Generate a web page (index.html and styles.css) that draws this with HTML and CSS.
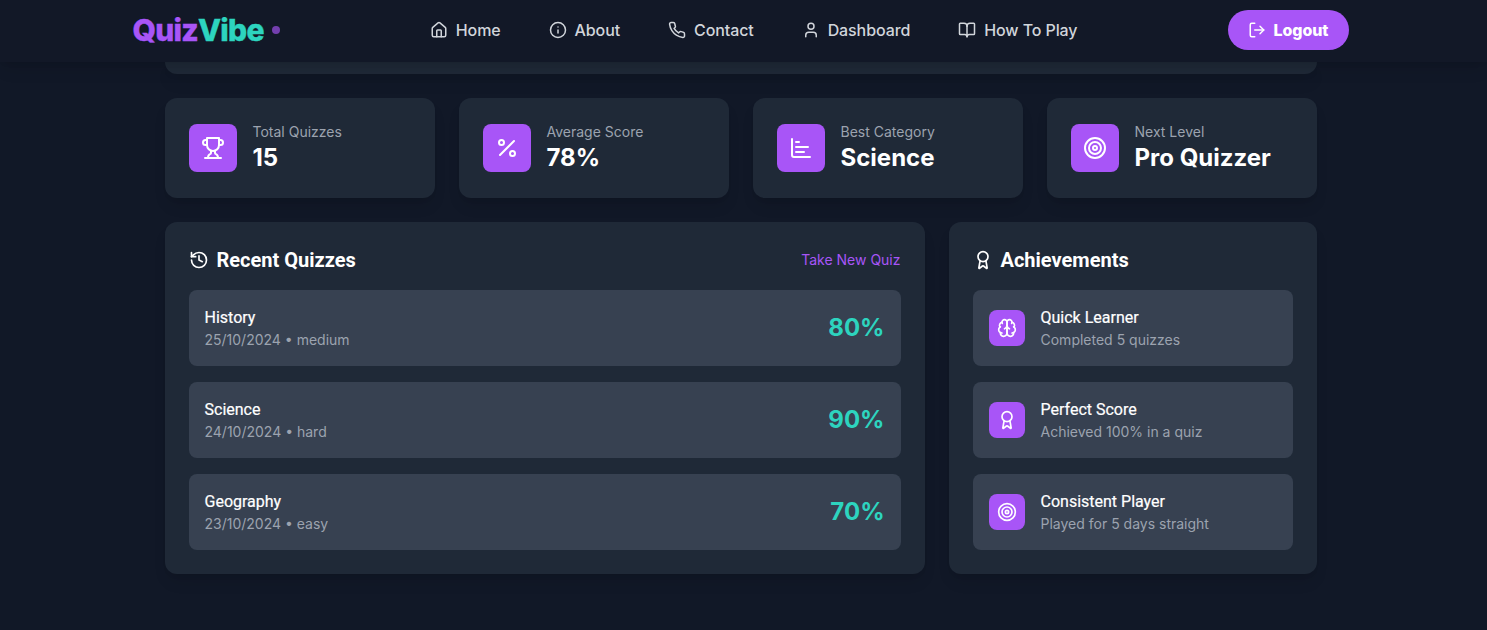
FILE: index.html
```html
<!DOCTYPE html>
<html lang="en">
<head>
<meta charset="utf-8">
<title>QuizVibe</title>
<link rel="stylesheet" href="styles.css">
</head>
<body>
<svg class="sprite" aria-hidden="true">
  <symbol id="home" viewBox="0 0 24 24"><path d="M15 21v-8a1 1 0 0 0-1-1h-4a1 1 0 0 0-1 1v8"/><path d="M3 10a2 2 0 0 1 .709-1.528l7-5.999a2 2 0 0 1 2.582 0l7 5.999A2 2 0 0 1 21 10v9a2 2 0 0 1-2 2H5a2 2 0 0 1-2-2z"/></symbol>
  <symbol id="info" viewBox="0 0 24 24"><circle cx="12" cy="12" r="10"/><path d="M12 16v-4"/><path d="M12 8h.01"/></symbol>
  <symbol id="phone" viewBox="0 0 24 24"><path d="M22 16.92v3a2 2 0 0 1-2.18 2 19.79 19.79 0 0 1-8.63-3.07 19.5 19.5 0 0 1-6-6 19.79 19.79 0 0 1-3.07-8.67A2 2 0 0 1 4.11 2h3a2 2 0 0 1 2 1.72 12.84 12.84 0 0 0 .7 2.81 2 2 0 0 1-.45 2.11L8.09 9.91a16 16 0 0 0 6 6l1.27-1.27a2 2 0 0 1 2.11-.45 12.84 12.84 0 0 0 2.81.7A2 2 0 0 1 22 16.92z"/></symbol>
  <symbol id="user" viewBox="0 0 24 24"><path d="M19 21v-2a4 4 0 0 0-4-4H9a4 4 0 0 0-4 4v2"/><circle cx="12" cy="7" r="4"/></symbol>
  <symbol id="book" viewBox="0 0 24 24"><path d="M12 7v14"/><path d="M3 18a1 1 0 0 1-1-1V4a1 1 0 0 1 1-1h5a4 4 0 0 1 4 4 4 4 0 0 1 4-4h5a1 1 0 0 1 1 1v13a1 1 0 0 1-1 1h-6a3 3 0 0 0-3 3 3 3 0 0 0-3-3z"/></symbol>
  <symbol id="logout" viewBox="0 0 24 24"><path d="M9 21H5a2 2 0 0 1-2-2V5a2 2 0 0 1 2-2h4"/><path d="m16 17 5-5-5-5"/><path d="M21 12H9"/></symbol>
  <symbol id="trophy" viewBox="0 0 24 24"><path d="M6 9H4.5a2.5 2.5 0 0 1 0-5H6"/><path d="M18 9h1.5a2.5 2.5 0 0 0 0-5H18"/><path d="M4 22h16"/><path d="M10 14.66V17c0 .55-.47.98-.97 1.21C7.85 18.75 7 20.24 7 22"/><path d="M14 14.66V17c0 .55.47.98.97 1.21C16.15 18.75 17 20.24 17 22"/><path d="M18 2H6v7a6 6 0 0 0 12 0V2Z"/></symbol>
  <symbol id="percent" viewBox="0 0 24 24"><path d="M19 5 5 19"/><circle cx="6.5" cy="6.5" r="2.5"/><circle cx="17.5" cy="17.5" r="2.5"/></symbol>
  <symbol id="chart" viewBox="0 0 24 24"><path d="M3 3v16a2 2 0 0 0 2 2h16"/><path d="M7 16h8"/><path d="M7 11h12"/><path d="M7 6h3"/></symbol>
  <symbol id="target" viewBox="0 0 24 24"><circle cx="12" cy="12" r="10"/><circle cx="12" cy="12" r="6"/><circle cx="12" cy="12" r="2"/></symbol>
  <symbol id="history" viewBox="0 0 24 24"><path d="M3 12a9 9 0 1 0 9-9 9.75 9.75 0 0 0-6.74 2.74L3 8"/><path d="M3 3v5h5"/><path d="M12 7v5l4 2"/></symbol>
  <symbol id="award" viewBox="0 0 24 24"><path d="m15.477 12.89 1.515 8.526a.5.5 0 0 1-.81.47l-3.58-2.687a1 1 0 0 0-1.197 0l-3.586 2.686a.5.5 0 0 1-.81-.469l1.514-8.526"/><circle cx="12" cy="8" r="6"/></symbol>
  <symbol id="brain" viewBox="0 0 24 24"><path d="M12 5a3 3 0 1 0-5.997.125 4 4 0 0 0-2.526 5.77 4 4 0 0 0 .556 6.588A4 4 0 1 0 12 18Z"/><path d="M12 5a3 3 0 1 1 5.997.125 4 4 0 0 1 2.526 5.77 4 4 0 0 1-.556 6.588A4 4 0 1 1 12 18Z"/><path d="M15 13a4.5 4.5 0 0 1-3-4 4.5 4.5 0 0 1-3 4"/><path d="M17.599 6.5a3 3 0 0 0 .399-1.375"/><path d="M6.003 5.125A3 3 0 0 0 6.401 6.5"/><path d="M3.477 10.896a4 4 0 0 1 .585-.396"/><path d="M19.938 10.5a4 4 0 0 1 .585.396"/><path d="M6 18a4 4 0 0 1-1.967-.516"/><path d="M19.967 17.484A4 4 0 0 1 18 18"/></symbol>
</svg>

<header class="site-header">
  <div class="header-inner">
    <a class="logo"><span class="logo-name"><span class="logo-quiz">Quiz</span><span class="logo-vibe">Vibe</span></span><span class="logo-dot"></span></a>
    <nav class="nav">
      <a class="nav-link"><svg class="icon icon-sm"><use href="#home"/></svg><span>Home</span></a>
      <a class="nav-link"><svg class="icon icon-sm"><use href="#info"/></svg><span>About</span></a>
      <a class="nav-link"><svg class="icon icon-sm"><use href="#phone"/></svg><span>Contact</span></a>
      <a class="nav-link"><svg class="icon icon-sm"><use href="#user"/></svg><span>Dashboard</span></a>
      <a class="nav-link"><svg class="icon icon-sm"><use href="#book"/></svg><span>How To Play</span></a>
    </nav>
    <button class="logout"><svg class="icon icon-sm"><use href="#logout"/></svg><span>Logout</span></button>
  </div>
</header>

<main class="dashboard">
  <section class="profile-card"></section>

  <section class="stats">
    <div class="card stat"><div class="tile tile-lg"><svg class="icon icon-lg"><use href="#trophy"/></svg></div><div><p class="muted">Total Quizzes</p><p class="stat-value">15</p></div></div>
    <div class="card stat"><div class="tile tile-lg"><svg class="icon icon-lg"><use href="#percent"/></svg></div><div><p class="muted">Average Score</p><p class="stat-value">78%</p></div></div>
    <div class="card stat"><div class="tile tile-lg"><svg class="icon icon-lg"><use href="#chart"/></svg></div><div><p class="muted">Best Category</p><p class="stat-value">Science</p></div></div>
    <div class="card stat"><div class="tile tile-lg"><svg class="icon icon-lg"><use href="#target"/></svg></div><div><p class="muted">Next Level</p><p class="stat-value">Pro Quizzer</p></div></div>
  </section>

  <section class="panels">
    <div class="card">
      <div class="panel-head"><h2 class="panel-title"><svg class="icon icon-md"><use href="#history"/></svg>Recent Quizzes</h2><a class="panel-link">Take New Quiz</a></div>
      <div class="rows">
        <div class="row quiz"><div><h3 class="row-title">History</h3><p class="muted">25/10/2024 • medium</p></div><span class="score">80%</span></div>
        <div class="row quiz"><div><h3 class="row-title">Science</h3><p class="muted">24/10/2024 • hard</p></div><span class="score">90%</span></div>
        <div class="row quiz"><div><h3 class="row-title">Geography</h3><p class="muted">23/10/2024 • easy</p></div><span class="score">70%</span></div>
      </div>
    </div>
    <div class="card">
      <div class="panel-head"><h2 class="panel-title"><svg class="icon icon-md"><use href="#award"/></svg>Achievements</h2></div>
      <div class="rows">
        <div class="row"><div class="tile tile-sm"><svg class="icon icon-md"><use href="#brain"/></svg></div><div><h3 class="row-title">Quick Learner</h3><p class="muted">Completed 5 quizzes</p></div></div>
        <div class="row"><div class="tile tile-sm"><svg class="icon icon-md"><use href="#award"/></svg></div><div><h3 class="row-title">Perfect Score</h3><p class="muted">Achieved 100% in a quiz</p></div></div>
        <div class="row"><div class="tile tile-sm"><svg class="icon icon-md"><use href="#target"/></svg></div><div><h3 class="row-title">Consistent Player</h3><p class="muted">Played for 5 days straight</p></div></div>
      </div>
    </div>
  </section>
</main>
</body>
</html>
```

FILE: styles.css
```css
* { box-sizing: border-box; margin: 0; padding: 0; }

body {
  min-height: 630px;
  padding-right: 6px;
  background: #111827;
  color: #fff;
  font-family: Inter, sans-serif;
  font-size: 16px;
  line-height: 24px;
  overflow: hidden;
}

.sprite { display: none; }

.icon {
  display: block;
  flex: none;
  fill: none;
  stroke: currentColor;
  stroke-width: 2;
  stroke-linecap: round;
  stroke-linejoin: round;
}
.icon-sm { width: 18px; height: 18px; }
.icon-md { width: 20px; height: 20px; }
.icon-lg { width: 24px; height: 24px; }

.site-header {
  position: relative;
  z-index: 1;
  height: 62px;
  margin-right: -6px;
  padding-right: 6px;
  background: #121827;
  box-shadow: 0 10px 15px -3px rgba(0, 0, 0, 0.1), 0 4px 6px -4px rgba(0, 0, 0, 0.1);
}
.header-inner {
  display: flex;
  align-items: center;
  justify-content: space-between;
  width: 1216px;
  height: 60px;
  margin: 0 auto;
}

.logo { display: flex; align-items: center; gap: 8px; }
.logo-name {
  font-size: 30px;
  font-weight: 800;
  line-height: 36px;
  letter-spacing: -0.75px;
  -webkit-text-stroke: 0.4px currentColor;
}
.logo-quiz { color: #a855f7; }
.logo-vibe { color: #2dd4bf; }
.logo-dot { width: 8px; height: 8px; border-radius: 50%; background: #a855f7; opacity: 0.65; }

.nav { display: flex; gap: 48px; color: #d1d5db; font-weight: 500; letter-spacing: -0.1px; }
.nav-link { display: flex; align-items: center; gap: 8px; }

.logout {
  display: flex;
  align-items: center;
  gap: 8px;
  width: 121px;
  height: 40px;
  padding: 0 20px;
  border: 0;
  border-radius: 20px;
  background: #a855f7;
  color: #fff;
  font: 800 16px/24px Inter, sans-serif;
  letter-spacing: -0.1px;
}

.dashboard { width: 1152px; margin: 0 auto; }

.profile-card {
  height: 12px;
  border-radius: 0 0 12px 12px;
  background: #1f2937;
  box-shadow: 0 10px 15px -3px rgba(0, 0, 0, 0.1), 0 4px 6px -4px rgba(0, 0, 0, 0.1);
}

.card {
  padding: 24px;
  border-radius: 12px;
  background: #1f2937;
  box-shadow: 0 10px 15px -3px rgba(0, 0, 0, 0.1), 0 4px 6px -4px rgba(0, 0, 0, 0.1);
}

.stats { display: grid; grid-template-columns: repeat(4, 1fr); gap: 24px; margin-top: 24px; }
.stat { display: flex; align-items: center; gap: 16px; }
.stat-value { font-size: 24px; font-weight: 700; line-height: 32px; }

.muted { color: #9ca3af; font-size: 14px; line-height: 20px; }

.tile { flex: none; border-radius: 8px; background: #a855f7; }
.tile-lg { padding: 12px; }
.tile-sm { padding: 8px; }

.panels { display: grid; grid-template-columns: 760px 368px; gap: 24px; margin-top: 24px; }
.panel-head { display: flex; align-items: center; justify-content: space-between; margin-bottom: 16px; }
.panel-title {
  display: flex;
  align-items: center;
  gap: 8px;
  font: 700 20px/28px Roboto, sans-serif;
}
.panel-link { color: #a855f7; font-size: 14px; line-height: 20px; }

.rows { display: grid; gap: 16px; }
.row {
  display: flex;
  align-items: center;
  gap: 16px;
  padding: 16px;
  border-radius: 8px;
  background: #374151;
}
.quiz { justify-content: space-between; }
.row-title { font: 400 16px/24px Roboto, sans-serif; -webkit-text-stroke: 0.2px currentColor; }
.score { color: #2dd4bf; font-size: 24px; font-weight: 700; line-height: 32px; }
```
